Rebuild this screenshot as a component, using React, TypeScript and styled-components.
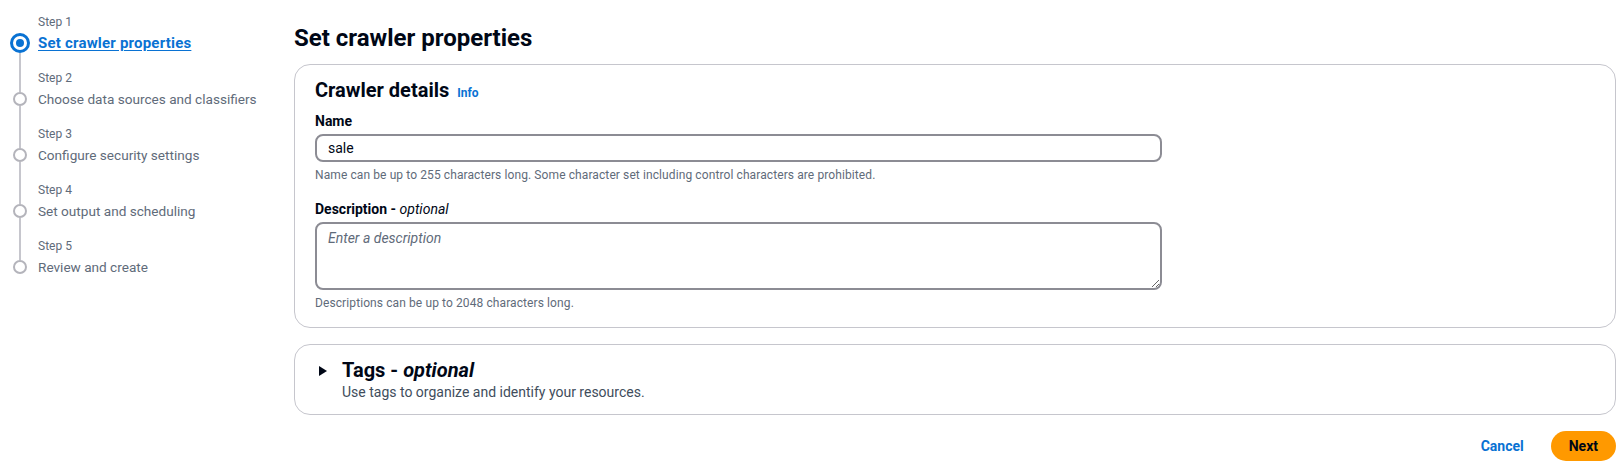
import React from 'react';
import styled, { createGlobalStyle } from 'styled-components';

const GlobalStyle = createGlobalStyle`
  html, body { margin: 0; padding: 0; background: #ffffff; }
  body {
    font-family: Roboto, "Noto Sans", "Liberation Sans", sans-serif;
    color: #000716;
  }
  *, *::before, *::after { box-sizing: border-box; }
`;

const Page = styled.div`
  display: flex;
  width: 1616px;
  height: 464px;
  overflow: hidden;
`;

const Sidebar = styled.nav`
  width: 294px;
  flex: none;
  padding: 14px 0 0 10px;
`;

const StepList = styled.ol`
  list-style: none;
  margin: 0;
  padding: 0;
`;

const Step = styled.li`
  display: grid;
  grid-template-columns: 20px 1fr;
  grid-template-rows: 19px 20px 17px;
  column-gap: 8px;
`;

const Line = styled.div<{ $visible: boolean }>`
  width: 2px;
  justify-self: center;
  background: ${p => (p.$visible ? '#c6c6cd' : 'transparent')};
`;

const IconCell = styled.div`
  display: flex;
  flex-direction: column;
  align-items: center;
`;

const Segment = styled.div<{ $visible: boolean }>`
  flex: 1;
  width: 2px;
  background: ${p => (p.$visible ? '#c6c6cd' : 'transparent')};
`;

const Circle = styled.div<{ $active: boolean }>`
  flex: none;
  border-radius: 50%;
  display: flex;
  align-items: center;
  justify-content: center;
  width: ${p => (p.$active ? 20 : 14)}px;
  height: ${p => (p.$active ? 20 : 14)}px;
  border: ${p => (p.$active ? '3px solid #0972d3' : '2px solid #b4b4bb')};
  background: #ffffff;
  &::after {
    content: '';
    display: ${p => (p.$active ? 'block' : 'none')};
    width: 8px;
    height: 8px;
    border-radius: 50%;
    background: #0972d3;
  }
`;

const StepNumber = styled.div`
  font-size: 12px;
  line-height: 16px;
  color: #5f6b7a;
`;

const StepTitle = styled.a<{ $active: boolean }>`
  font-size: ${p => (p.$active ? '15px' : '13.6px')};
  line-height: 20px;
  white-space: nowrap;
  color: ${p => (p.$active ? '#0972d3' : '#5f6b7a')};
  font-weight: ${p => (p.$active ? 700 : 400)};
  letter-spacing: ${p => (p.$active ? '0.2px' : '0')};
  text-decoration: ${p => (p.$active ? 'underline' : 'none')};
  text-underline-offset: 2px;
`;

const Main = styled.main`
  flex: 1;
  min-width: 0;
  display: flex;
  flex-direction: column;
  padding-top: 23px;
`;

const PageTitle = styled.h1`
  margin: 0 0 11px 0;
  font-size: 24px;
  line-height: 30px;
  font-weight: 700;
  color: #000716;
`;

const Panel = styled.section<{ $pad: string }>`
  border: 1px solid #c6c6cd;
  border-radius: 16px;
  padding: ${p => p.$pad};
  background: #ffffff;
`;

const PanelHeading = styled.h2`
  margin: 0;
  font-size: 20px;
  line-height: 24px;
  font-weight: 700;
  color: #000716;
`;

const InfoLink = styled.a`
  font-size: 12px;
  font-weight: 700;
  color: #0972d3;
  margin-left: 8px;
  text-decoration: none;
`;

const Field = styled.div<{ $top: number }>`
  margin-top: ${p => p.$top}px;
  max-width: 847px;
`;

const Label = styled.label`
  display: block;
  font-size: 14px;
  line-height: 20px;
  font-weight: 700;
  color: #000716;
  margin-bottom: 3px;
  em { font-weight: 400; }
`;

const TextInput = styled.input`
  display: block;
  width: 100%;
  height: 28px;
  border: 2px solid #8c8c94;
  border-radius: 8px;
  padding: 0 11px;
  font-family: inherit;
  font-size: 14px;
  color: #000716;
  outline: none;
`;

const TextArea = styled.textarea`
  display: block;
  width: 100%;
  height: 68px;
  border: 2px solid #8c8c94;
  border-radius: 8px;
  padding: 4px 11px;
  font-family: inherit;
  font-size: 14px;
  line-height: 20px;
  color: #000716;
  resize: vertical;
  outline: none;
  &::placeholder { color: #5f6b7a; font-style: italic; }
`;

const Help = styled.div`
  margin-top: 5px;
  font-size: 12px;
  line-height: 16px;
  letter-spacing: 0.1px;
  color: #5f6b7a;
  white-space: nowrap;
`;

const Gap = styled.div`
  height: 16px;
  flex: none;
`;

const ExpandHeader = styled.div`
  display: grid;
  grid-template-columns: 16px 1fr;
  column-gap: 11px;
  align-items: center;
`;

const TagsTitle = styled.h2`
  margin: 0;
  font-size: 20px;
  line-height: 24px;
  font-weight: 700;
  color: #000716;
  em { font-weight: 700; }
`;

const TagsDesc = styled.div`
  grid-column: 2;
  font-size: 14px;
  line-height: 20px;
  color: #414d5c;
`;

const Caret = styled.svg`
  justify-self: center;
  margin-top: 2px;
`;

const Footer = styled.div`
  display: flex;
  justify-content: flex-end;
  align-items: center;
  gap: 9px;
  margin-top: 16px;
`;

const Button = styled.button<{ $primary?: boolean }>`
  height: 30px;
  padding: 0 18px;
  border-radius: 20px;
  border: none;
  font-family: inherit;
  font-size: 14px;
  font-weight: 700;
  cursor: pointer;
  background: ${p => (p.$primary ? '#ff9900' : 'transparent')};
  color: ${p => (p.$primary ? '#000716' : '#0972d3')};
`;

const steps = [
  'Set crawler properties',
  'Choose data sources and classifiers',
  'Configure security settings',
  'Set output and scheduling',
  'Review and create',
];

export default function App() {
  return (
    <>
      <GlobalStyle />
      <Page>
        <Sidebar>
          <StepList>
            {steps.map((s, i) => {
              const first = i === 0;
              const last = i === steps.length - 1;
              const active = i === 0;
              return (
                <Step key={s}>
                  <Line $visible={!first} />
                  <StepNumber>Step {i + 1}</StepNumber>
                  <IconCell>
                    <Segment $visible={!first} />
                    <Circle $active={active} />
                    <Segment $visible={!last} />
                  </IconCell>
                  <StepTitle $active={active} href={active ? '#' : undefined}>
                    {s}
                  </StepTitle>
                  <Line $visible={!last} />
                </Step>
              );
            })}
          </StepList>
        </Sidebar>
        <Main>
          <PageTitle>Set crawler properties</PageTitle>
          <Panel $pad="13px 20px 16px 20px">
            <PanelHeading>
              Crawler details<InfoLink href="#">Info</InfoLink>
            </PanelHeading>
            <Field $top={6}>
              <Label>Name</Label>
              <TextInput defaultValue="sale" />
              <Help>
                Name can be up to 255 characters long. Some character set including control characters are prohibited.
              </Help>
            </Field>
            <Field $top={16}>
              <Label>
                Description - <em>optional</em>
              </Label>
              <TextArea placeholder="Enter a description" />
              <Help>Descriptions can be up to 2048 characters long.</Help>
            </Field>
          </Panel>
          <Gap />
          <Panel $pad="13px 20px 12px 20px">
            <ExpandHeader>
              <Caret width="8" height="10" viewBox="0 0 8 10">
                <polygon points="0,0 8,5 0,10" fill="#000716" />
              </Caret>
              <TagsTitle>
                Tags - <em>optional</em>
              </TagsTitle>
              <TagsDesc>Use tags to organize and identify your resources.</TagsDesc>
            </ExpandHeader>
          </Panel>
          <Footer>
            <Button>Cancel</Button>
            <Button $primary>Next</Button>
          </Footer>
        </Main>
      </Page>
    </>
  );
}
